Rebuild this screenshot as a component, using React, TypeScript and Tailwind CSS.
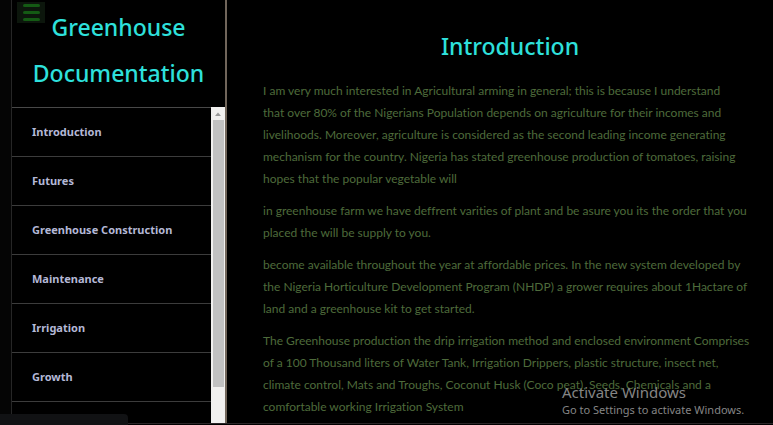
const sections = [
  "Introduction",
  "Futures",
  "Greenhouse Construction",
  "Maintenance",
  "Irrigation",
  "Growth",
];

const paragraphs = [
  [
    "I am very much interested in Agricultural arming in general; this is because I understand",
    "that over 80% of the Nigerians Population depends on agriculture for their incomes and",
    "livelihoods. Moreover, agriculture is considered as the second leading income generating",
    "mechanism for the country. Nigeria has stated greenhouse production of tomatoes, raising",
    "hopes that the popular vegetable will",
  ],
  [
    "in greenhouse farm we have deffrent varities of plant and be asure you its the order that you",
    "placed the will be supply to you.",
  ],
  [
    "become available throughout the year at affordable prices. In the new system developed by",
    "the Nigeria Horticulture Development Program (NHDP) a grower requires about 1Hactare of",
    "land and a greenhouse kit to get started.",
  ],
  [
    "The Greenhouse production the drip irrigation method and enclosed environment Comprises",
    "of a 100 Thousand liters of Water Tank, Irrigation Drippers, plastic structure, insect net,",
    "climate control, Mats and Troughs, Coconut Husk (Coco peat), Seeds, Chemicals and a",
    "comfortable working Irrigation System",
  ],
];

function Sidebar() {
  return (
    <nav className="flex w-[216px] shrink-0 flex-col border-r-2 border-l border-l-[#262626] border-r-[#71665b] bg-black">
      <h1 className="h-[107px] pt-1 text-center text-[23px] leading-[46px] font-medium text-[#2ee0dc]">
        Greenhouse
        <br />
        Documentation
      </h1>
      <div className="flex min-h-0 flex-1">
        <ul className="min-w-0 flex-1 overflow-hidden border-t border-[#484848]">
          {sections.map((name) => (
            <li key={name} className="border-b border-[#3c3c3c]">
              <a href="#introduction" className="block px-5 text-[11px] leading-[48px] font-bold text-[#b4b8d6]">
                {name}
              </a>
            </li>
          ))}
        </ul>
        <div className="flex w-3.5 shrink-0 flex-col items-center bg-[#f1f0ef]">
          <svg viewBox="0 0 14 13" className="h-[13px] w-3.5" aria-hidden="true">
            <path d="M4 9 L7 5.5 L10 9 Z" fill="#999" />
          </svg>
          <div className="h-[267px] w-[11px] bg-[#c1c1c1]" />
        </div>
      </div>
    </nav>
  );
}

export default function App() {
  return (
    <div className="relative flex h-screen flex-col overflow-hidden bg-black font-['Noto_Sans','Open_Sans',sans-serif]">
      <div className="flex min-h-0 flex-1 border-b border-[#2a2528] bg-[#050505] pl-[11px]">
        <Sidebar />
        <main id="introduction" className="min-w-0 flex-1 overflow-hidden bg-black pr-4 pl-9">
          <h2 className="mt-7 text-center text-[23px] leading-9 font-medium text-[#2ee0dc]">Introduction</h2>
          <div className="mt-4 flex flex-col gap-2.5 font-[Lato,sans-serif] text-xs leading-[22px] whitespace-nowrap text-[#4e6b3b] [font-variant-ligatures:none]">
            {paragraphs.map((lines) => (
              <p key={lines[0]}>
                {lines.map((line) => (
                  <span key={line} className="block">
                    {line}
                  </span>
                ))}
              </p>
            ))}
          </div>
        </main>
      </div>
      <div className="h-px shrink-0" />

      <button
        type="button"
        aria-label="Toggle menu"
        className="absolute top-0.5 left-[17px] flex h-[21px] w-7 flex-col items-center justify-center gap-1 bg-[#0c160c]"
      >
        <span className="h-[3px] w-[17px] rounded-sm bg-[#145a14]" />
        <span className="h-[3px] w-[17px] rounded-sm bg-[#145a14]" />
        <span className="h-[3px] w-[17px] rounded-sm bg-[#145a14]" />
      </button>
      <div className="absolute bottom-0 left-0 h-[11px] w-32 rounded-tr-sm bg-[#111214]" />
      <div className="absolute right-6 bottom-[7px] w-[187px] text-[#858585]">
        <p className="text-[15px] leading-5">Activate Windows</p>
        <p className="text-[11px] leading-4">Go to Settings to activate Windows.</p>
      </div>
    </div>
  );
}
